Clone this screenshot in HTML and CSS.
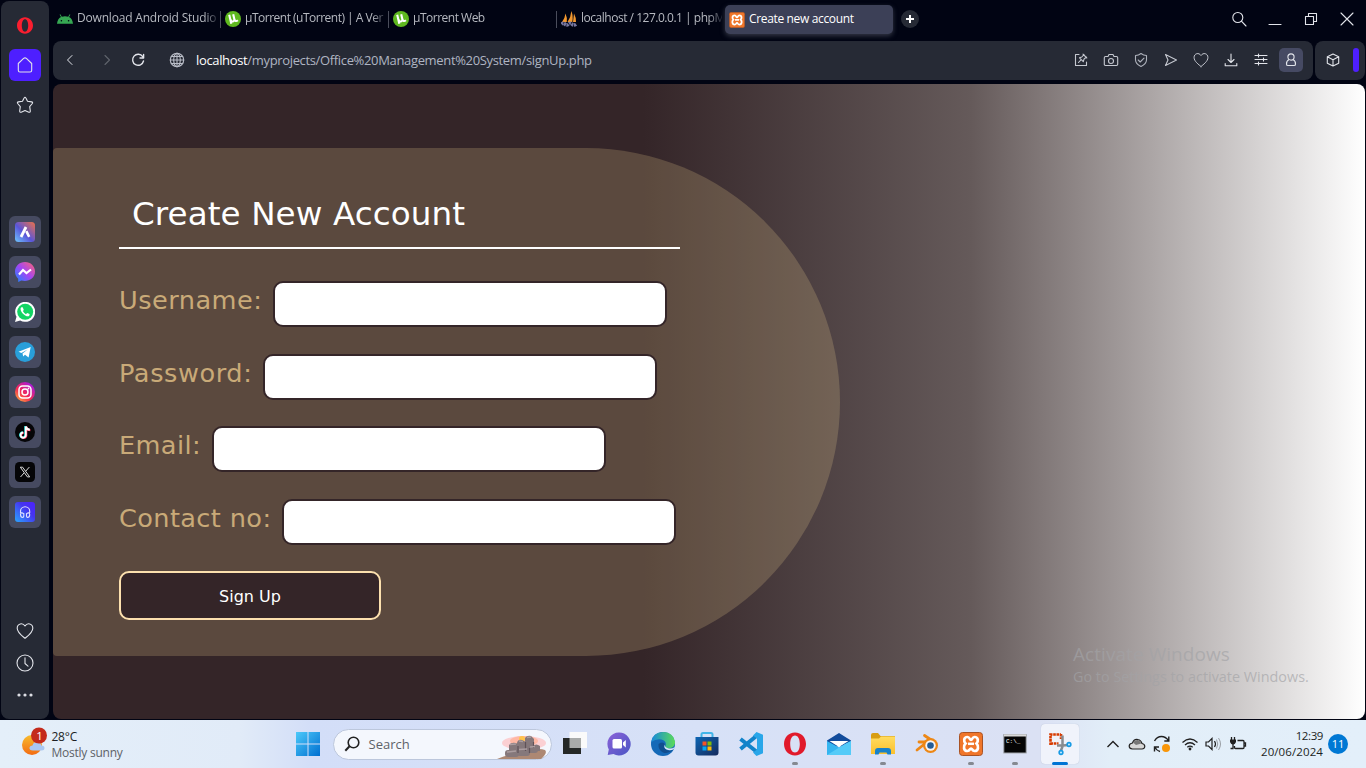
FILE: index.html
```html
<!DOCTYPE html>
<html lang="en">
<head>
<meta charset="utf-8">
<title>Create new account</title>
<link rel="stylesheet" href="styles.css">
</head>
<body>
<svg class="defs" width="0" height="0">
  <defs>
    <linearGradient id="aria" x1="0" y1="1" x2="1" y2="0"><stop offset="0" stop-color="#6fc8ff"/><stop offset=".45" stop-color="#5a55d8"/><stop offset="1" stop-color="#ee7148"/></linearGradient>
    <linearGradient id="mess" x1="0" y1="1" x2="1" y2="0"><stop offset="0" stop-color="#1688ff"/><stop offset=".5" stop-color="#a345f4"/><stop offset="1" stop-color="#ff6670"/></linearGradient>
    <linearGradient id="insta" x1="0" y1="1" x2=".8" y2="0"><stop offset="0" stop-color="#ffc63c"/><stop offset=".45" stop-color="#f52b50"/><stop offset="1" stop-color="#a018e8"/></linearGradient>
    <linearGradient id="phones" x1="0" y1="1" x2="1" y2="0"><stop offset="0" stop-color="#2aa6ff"/><stop offset=".6" stop-color="#4535ef"/><stop offset="1" stop-color="#4d20ff"/></linearGradient>
    <linearGradient id="win" x1="0" y1="0" x2="1" y2="1"><stop offset="0" stop-color="#4cc9fa"/><stop offset="1" stop-color="#006fd0"/></linearGradient>
    <linearGradient id="edge" x1="0" y1="0" x2="1" y2="0"><stop offset="0" stop-color="#1788dc"/><stop offset="1" stop-color="#5bdc58"/></linearGradient>
    <linearGradient id="store" x1="0" y1="0" x2="1" y2="1"><stop offset="0" stop-color="#0d66b4"/><stop offset="1" stop-color="#152a5c"/></linearGradient>
    <linearGradient id="chat" x1="0" y1="0" x2="1" y2="1"><stop offset="0" stop-color="#8b62d8"/><stop offset="1" stop-color="#4a55c4"/></linearGradient>
    <linearGradient id="folder" x1="0" y1="0" x2="0" y2="1"><stop offset="0" stop-color="#ffdc60"/><stop offset="1" stop-color="#fbc02c"/></linearGradient>
    <linearGradient id="sun" x1="0" y1="0" x2="0" y2="1"><stop offset="0" stop-color="#f8bc2d"/><stop offset="1" stop-color="#f36b12"/></linearGradient>
    <symbol id="ut" viewBox="0 0 16 16"><circle cx="8" cy="8" r="8" fill="#5fb91f"/><path d="M4.200 3.700L6.300 12.800M5.500 8.500C6.500 11.500 9.800 11 9.300 8L8.200 3.300M9.300 8C9.800 10.200 11.300 10.600 12.900 9.200" fill="none" stroke="#fff" stroke-width="2.100"/></symbol>
    <symbol id="xampp" viewBox="0 0 24 24"><rect x=".5" y=".5" width="23" height="23" rx="3" fill="#f0762a" stroke="#a95325"/><path d="M8.500 5C4.500 5 4.500 9.500 6.500 11.500C4 14 4.500 19 8.500 19C11 19 10.500 16.500 12 16.500S13 19 15.500 19C19.500 19 20 14 17.500 11.500C19.500 9.500 19.500 5 15.500 5C13 5 13.500 8 12 8S11 5 8.500 5Z" fill="none" stroke="#fff" stroke-width="2.700"/><path d="M9 11.800h6" stroke="#fff" stroke-width="2.500"/></symbol>
    <symbol id="heart" viewBox="0 0 18 18"><path d="M9 16.300C6.500 14.200 1.200 10.500 1.200 6.200C1.200 1.500 6.700.2 9 4C11.300.2 16.800 1.500 16.800 6.200C16.800 10.500 11.500 14.200 9 16.300Z"/></symbol>
  </defs>
</svg>
<div class="browser">
  <nav class="sidebar">
    <span class="cell"><svg width="16" height="17" viewBox="0 0 16 17"><path fill-rule="evenodd" fill="#fa1e2f" d="M8 .3C3.500.3 0 4 0 8.500S3.500 16.700 8 16.700S16 13 16 8.500S12.500.3 8 .3ZM8 2.300C9.900 2.300 11.200 5 11.200 8.500S9.900 14.700 8 14.700S4.800 12 4.800 8.500S6.100 2.300 8 2.300Z"/></svg></span>
    <span class="cell home"><svg class="line" width="16" height="16" viewBox="0 0 16 16"><path d="M1.300 6.500L6.600 1.400Q8 .3 9.400 1.400L14.700 6.500V13.200Q14.700 15 13 15H3Q1.300 15 1.300 13.200Z"/></svg></span>
    <span class="cell"><svg class="line" width="18" height="18" viewBox="0 0 18 18"><path d="M9 1.200Q9.600 1.200 9.900 1.900L11.500 5.200L15.600 5.900Q17.200 6.300 16.300 7.500L13.700 10.600L14.300 14.900Q14.300 16.700 12.800 16.200L9 14.500L5.200 16.200Q3.700 16.700 3.700 14.900L4.300 10.600L1.700 7.500Q.8 6.300 2.400 5.900L6.500 5.200L8.100 1.900Q8.400 1.200 9 1.200Z"/></svg></span>
    <div class="apps">
      <span class="cell app"><svg width="20" height="20" viewBox="0 0 20 20"><rect width="20" height="20" rx="3.500" fill="url(#aria)"/><path d="M11 5L6 15" stroke="#fff" stroke-width="2.800"/><path d="M11.300 9.200L14.200 14.800" stroke="#fff" stroke-width="2.600"/></svg></span>
      <span class="cell app"><svg width="20" height="20" viewBox="0 0 20 20"><path fill="url(#mess)" d="M10 0C4.300 0 0 4.100 0 9.600C0 12.600 1.200 15 3.200 16.700V20L6.400 18.500C12.500 20.300 20 17 20 9.600C20 4.100 15.700 0 10 0Z"/><path d="M4 12.500L8 8L11.500 11L16 7.500" fill="none" stroke="#fff" stroke-width="2.200"/></svg></span>
      <span class="cell app"><svg width="20" height="20" viewBox="0 0 20 20"><path d="M0 20L1.500 14.800A10 10 0 1 1 5.200 18.500Z" fill="#fff"/><circle cx="10.200" cy="9.800" r="8" fill="#13d564"/><path d="M6.500 5.300C4.500 6.500 6 10 8.300 12C11 14.500 13.500 15.200 14.500 13.200L14.600 12L12.200 10.900L10.900 12.200Q8.800 11.200 7.900 9.100L8.800 7.900L7.700 5.300Z" fill="#fff"/></svg></span>
      <span class="cell app"><svg width="20" height="20" viewBox="0 0 20 20"><circle cx="10" cy="10" r="10" fill="#299fda"/><path d="M3.500 9.800L15.700 5L13.600 15.400L10 12.700L8.200 14.600L7.500 11.600L12.600 7.500L6.400 11.100Z" fill="#fff"/></svg></span>
      <span class="cell app"><svg width="20" height="20" viewBox="0 0 20 20"><circle cx="10" cy="10" r="10" fill="url(#insta)"/><g fill="none" stroke="#fff" stroke-width="1.500"><rect x="4" y="4" width="12" height="12" rx="3.500"/><circle cx="10" cy="10" r="3"/></g><circle cx="13.500" cy="6.500" r=".9" fill="#fff"/></svg></span>
      <span class="cell app"><svg width="20" height="20" viewBox="0 0 20 20"><circle cx="10" cy="10" r="10" fill="#050507"/><g fill="none" stroke-width="1.900"><path stroke="#23e6e0" d="M10.200 4v8.800a2.600 2.600 0 1 1-2.600-2.500M10.500 4.200q.5 3 3.900 3.200"/><path stroke="#f8305c" d="M11.400 4.800v8.600a2.600 2.600 0 1 1-2.600-2.500M11.500 5q.5 3 3.900 3.200"/><path stroke="#fff" d="M10.800 4.400V13a2.600 2.600 0 1 1-2.600-2.500M10.900 4.500q.5 3 3.900 3.200"/></g></svg></span>
      <span class="cell app"><svg width="20" height="20" viewBox="0 0 20 20"><rect width="20" height="20" rx="4.500" fill="#050507"/><path d="M5.300 5.200h2.300l7.100 9.700h-2.300ZM14.300 5.100L10.700 9.200M9 11L5.500 15" fill="none" stroke="#ddd" stroke-width="1"/></svg></span>
      <span class="cell app"><svg width="20" height="20" viewBox="0 0 20 20"><rect width="20" height="20" rx="3" fill="url(#phones)"/><path d="M5.500 11V9.300a4.600 4.600 0 0 1 9.200 0V11M8.800 14V11.600Q5.700 9.700 5.500 12.500Q5.500 15.500 7.800 15.500Q8.800 15 8.800 14ZM11.500 14V11.600Q14.500 9.700 14.700 12.500Q14.700 15.500 12.500 15.500Q11.500 15 11.500 14Z" fill="none" stroke="#dfe0ff" stroke-width="1.100"/></svg></span>
    </div>
    <div class="side-end">
      <span class="cell"><svg class="line" width="18" height="18"><use href="#heart"/></svg></span>
      <span class="cell"><svg class="line" width="18" height="18" viewBox="0 0 18 18"><circle cx="9" cy="9" r="8"/><path d="M9 3.800V9.500L12 12.200"/></svg></span>
      <span class="cell"><svg width="16" height="4" viewBox="0 0 16 4" fill="#dcdee4"><circle cx="2" cy="2" r="1.600"/><circle cx="8" cy="2" r="1.600"/><circle cx="14" cy="2" r="1.600"/></svg></span>
    </div>
  </nav>
  <div class="main">
    <header class="tabs">
      <div class="tab"><svg width="16" height="16" viewBox="0 0 16 16"><path d="M0 12.800Q.5 7.800 4 6.100L2.600 3.700L3.300 3.300L4.800 5.700Q8 4.600 11.200 5.700L12.700 3.300L13.400 3.700L12 6.100Q15.500 7.800 16 12.800Z" fill="#36a853"/><circle cx="4.400" cy="9.800" r=".8" fill="#010413"/><circle cx="11.600" cy="9.800" r=".8" fill="#010413"/></svg><span class="tab-title t1">Download Android Studio</span></div>
      <div class="tab ruled"><svg width="16" height="16"><use href="#ut"/></svg><span class="tab-title t2">µTorrent (uTorrent) | A Ver</span></div>
      <div class="tab ruled"><svg width="16" height="16"><use href="#ut"/></svg><span class="tab-title t3">µTorrent Web</span></div>
      <div class="tab ruled"><svg width="16" height="16" viewBox="0 0 16 16"><path d="M1 11Q4 7 4.500 2.500Q6.500 7 5.800 11ZM6.500 11Q10 6 10.300 0Q12.500 5 11.300 11ZM12 11L13 2.500Q15.200 6.500 15 11Z" fill="#f2982f"/><path d="M.5 13.200q2-1.800 3.500 0t3.500 0 3.500 0 4 0" stroke="#77779f" stroke-width="3.500" stroke-dasharray="2.200 .6" fill="none"/></svg><span class="tab-title t4">localhost / 127.0.0.1 | phpM</span></div>
      <div class="tab active"><svg width="16" height="16"><use href="#xampp"/></svg><span class="tab-title t5">Create new account</span></div>
      <span class="new-tab"><svg width="10" height="10" viewBox="0 0 10 10"><path d="M5 1v8M1 5h8" stroke="#fff" stroke-width="2"/></svg></span>
      <div class="window-buttons">
        <svg class="line" width="16" height="16" viewBox="0 0 16 16"><circle cx="6.800" cy="6.500" r="5"/><path d="M10.400 10.200L15 15"/></svg>
        <svg class="line" width="16" height="16" viewBox="0 0 16 16"><path d="M2 13.500h12"/></svg>
        <svg class="line" width="16" height="16" viewBox="0 0 16 16"><path d="M2.500 5.500h8v8h-8ZM5.500 5.500v-3h8v8h-3"/></svg>
        <svg class="line" width="16" height="16" viewBox="0 0 16 16"><path d="M2 2L14 14M14 2L2 14"/></svg>
      </div>
    </header>
    <div class="bars">
      <div class="address-bar">
        <svg class="line back" width="16" height="16" viewBox="0 0 16 16"><path d="M10 3.500L5.500 8L10 12.500"/></svg>
        <svg class="line forward" width="16" height="16" viewBox="0 0 16 16"><path d="M6 3.500L10.500 8L6 12.500"/></svg>
        <svg class="line reload" width="16" height="16" viewBox="0 0 16 16"><path d="M12.700 4.700A5.500 5.500 0 1 0 13.500 9M13.600 2.500V6H10"/></svg>
        <svg class="line globe" width="16" height="16" viewBox="0 0 16 16"><g stroke="#b9bdc7"><circle cx="8" cy="8" r="6.700"/><ellipse cx="8" cy="8" rx="3.300" ry="6.700"/><path d="M8 1.300v13.400M1.300 8h13.400M2.300 4.500h11.400M2.300 11.500h11.400"/></g></svg>
        <span class="url"><b>localhost</b>/myprojects/Office%20Management%20System/signUp.php</span>
        <div class="actions">
          <span><svg class="line soft" width="16" height="16" viewBox="0 0 16 16"><path d="M6 2.500H2.500v11h11V10M10 2.200L13.800 6M11 2.500L8.800 5L6.500 5.800L10.300 9.600L11 7.200L13.500 5M8 7.800L5.500 10.500"/></svg></span>
          <span><svg class="line soft" width="16" height="16" viewBox="0 0 16 16"><path d="M5 4.500L6 2.500h4l1 2h2.500q1.200 0 1.200 1.200v6.600q0 1.200-1.200 1.200h-11q-1.200 0-1.200-1.200V5.700Q1.300 4.500 2.500 4.500Z"/><circle cx="8" cy="9" r="2.500"/></svg></span>
          <span><svg class="line dim" width="16" height="16" viewBox="0 0 16 16"><path d="M8 1.500Q10.500 3.500 13.500 3.500V8Q13.300 12 8 14.500Q2.700 12 2.500 8V3.500Q5.500 3.500 8 1.500ZM5.200 8L7.200 10L11 6.200"/></svg></span>
          <span><svg class="line soft" width="16" height="16" viewBox="0 0 16 16"><path d="M2.500 2.500L13.500 8L2.500 13.500L5 8Z"/></svg></span>
          <span><svg class="line soft" width="16" height="16"><use href="#heart"/></svg></span>
          <span><svg class="line" width="16" height="16" viewBox="0 0 16 16"><path d="M8 2v8.500M5 7.500L8 10.500L11 7.500M2.200 11.500v2.200h11.600v-2.200"/></svg></span>
          <span><svg class="line" width="16" height="16" viewBox="0 0 16 16"><path d="M2 3.500h12M2 7.500h12M2 11.500h12M5.500 2v3M10.500 6v3M5.500 10v3"/></svg></span>
          <span class="profile"><svg class="line" width="16" height="16" viewBox="0 0 16 16"><circle cx="8" cy="5" r="3.100"/><path d="M6 7.500Q3.200 9 3.500 12.200Q3.500 13.500 5 13.500h6Q12.500 13.500 12.500 12.200Q12.800 9 10 7.500"/></svg></span>
        </div>
      </div>
      <div class="extension-bar"><svg class="line" width="16" height="16" viewBox="0 0 16 16"><path d="M8 2L13.700 4.800V11.200L8 14L2.300 11.200V4.800ZM2.300 4.800L8 7.700L13.700 4.800M8 7.700V14"/></svg><i></i></div>
    </div>
    <main class="page">
      <form class="panel">
        <h1><span>Create New Account</span></h1>
        <div class="field"><label class="username">Username:</label><input type="text"></div>
        <div class="field"><label class="password">Password:</label><input type="password"></div>
        <div class="field"><label class="email">Email:</label><input type="text"></div>
        <div class="field"><label class="contact">Contact no:</label><input type="text"></div>
        <button type="button"><span>Sign Up</span></button>
      </form>
      <div class="watermark"><div class="wm-title"><span>Activate Windows</span></div><div class="wm-text"><span>Go to Settings to activate Windows.</span></div></div>
    </main>
  </div>
</div>
<footer class="taskbar">
  <div class="weather">
    <svg width="28" height="30" viewBox="0 0 28 30"><circle cx="11" cy="18" r="10" fill="url(#sun)"/><path d="M12 23.500q-4 0-3.500-3q.5-2 3-2q1-4 5.500-3q3 .5 3.500 3q3 0 3 2.500q0 2.500-3 2.500Z" fill="#a9c7f3"/><circle cx="18" cy="8.500" r="8" fill="#c42b1c"/><text x="15.300" y="12.600" fill="#fff" font-size="11.500">1</text></svg>
    <div><div class="temp">28°C</div><div class="sky">Mostly sunny</div></div>
  </div>
  <div class="apps-row">
    <svg class="start" width="24" height="24" viewBox="0 0 24 24"><path d="M0 0h11.500v11.500H0ZM12.500 0H24v11.500H12.500ZM0 12.500h11.500V24H0ZM12.500 12.500H24V24H12.500Z" fill="url(#win)"/></svg>
    <div class="search"><svg width="16" height="16" viewBox="0 0 16 16"><circle cx="9.500" cy="6.500" r="5.300" fill="none" stroke="#222" stroke-width="1.600"/><path d="M5.500 10.300L1.300 14.800" stroke="#222" stroke-width="2"/></svg><span>Search</span>
      <svg class="rocks" width="52" height="26" viewBox="0 0 52 26"><ellipse cx="28" cy="9" rx="22" ry="7" fill="#fbd0d3"/><ellipse cx="28" cy="7" rx="14" ry="5" fill="#ffb8a4"/><circle cx="26" cy="5" r="3" fill="#ffc44c"/><path d="M1 25Q12 20 22 20Q40 13 49 16Q52 19 45 25Z" fill="#ad8873"/><g fill="#85787b"><path d="M13 17V11Q15 8 20 9L23 11V17Z"/><path d="M21 18V9Q22 5 26 6L30 8V18Z"/><path d="M29 17V4Q31 1 35 2L38 5V17Z"/><path d="M37 17V12Q40 9 44 12V17Z"/><rect x="9" y="16" width="14" height="7" rx="3"/><rect x="21" y="14" width="13" height="8" rx="3"/><rect x="32" y="12" width="10" height="7" rx="3"/></g><path d="M22 12v7M29.500 8v9M33.500 14v5M37.500 8v6" stroke="#5f5258" stroke-width="1.200"/><path d="M14 10.500l6-.5M23 7l4 .500M31 3.500l4-.5M11 18l9-1M23 15.500l8-.5M34 13l5-.5" stroke="#ab9da0" stroke-width="1.500"/></svg>
    </div>
    <span class="task"><svg width="24" height="24" viewBox="0 0 24 24"><path d="M6.500 0H24v16H6.500Z" fill="#fafafa"/><path d="M0 6h18v16H0Z" fill="#252827"/><path d="M6.500 6H18v10H6.500Z" fill="#a9abaa"/></svg></span>
    <span class="task"><svg width="24" height="24" viewBox="0 0 24 24"><path d="M12 .5a11.500 11.500 0 1 1-5.500 21.500L.7 23L1.800 17.500A11.500 11.500 0 0 1 12 .5Z" fill="url(#chat)"/><rect x="5.500" y="7" width="9.500" height="9.500" rx="1.500" fill="#fff"/><path d="M16 10.500L18.800 8V15.500L16 13Z" fill="#fff"/></svg></span>
    <span class="task"><svg width="24" height="24" viewBox="0 0 24 24"><circle cx="12" cy="12" r="12" fill="#1569b8"/><path d="M.3 10Q2 0 12 0Q22 0 24 9.500Q24.500 16 17 16.500Q13 16.500 14.500 14Q16 9 10.500 7.500Q5 6.500 .3 10Z" fill="url(#edge)"/><path d="M7.500 12Q7 18 12 20.500Q17 22.500 22 18Q17 20 14 16.500Q12.500 14.500 14 12.500Q12.500 9 7.500 12Z" fill="#114e8f"/><path d="M14 12.500Q12 15.500 15.500 17.500Q19 19 22.300 17.500L24 15Q20 17.500 16.500 16Q13.500 15 14 12.500Z" fill="#dce8f8"/></svg></span>
    <span class="task"><svg width="24" height="24" viewBox="0 0 24 24"><path d="M6.500 6V2.500Q6.500 1 8 1h8q1.500 0 1.500 1.500V6" fill="none" stroke="#42b5e8" stroke-width="2"/><path d="M.5 5h23v15.500q0 3-3 3H3.500q-3 0-3-3Z" fill="url(#store)"/><path d="M7.500 9.500h4v4h-4Z" fill="#f35325"/><path d="M12.500 9.500h4v4h-4Z" fill="#81bc06"/><path d="M7.500 14.500h4v4h-4Z" fill="#05a6f0"/><path d="M12.500 14.500h4v4h-4Z" fill="#ffba08"/></svg></span>
    <span class="task"><svg width="24" height="24" viewBox="0 0 24 24"><path d="M1.500 7L18 20M1.500 17L18 3.500" stroke="#1283ca" stroke-width="4"/><path d="M17.500 0L24 2.800V21.200L17.500 24L14 20.500L18 17.500V6.500L14 3.500Z" fill="#29a6e9"/></svg></span>
    <span class="task run"><svg width="24" height="24" viewBox="0 0 24 24"><path fill-rule="evenodd" fill="#e11a2b" d="M12 .5C5.500.5 1 5.500 1 12S5.500 23.500 12 23.500S23 18.500 23 12S18.500.5 12 .5ZM12 3.500C15 3.500 16.800 7 16.800 12S15 20.500 12 20.500S7.200 17 7.200 12S9 3.500 12 3.500Z"/></svg></span>
    <span class="task"><svg width="24" height="24" viewBox="0 0 24 24"><path d="M0 8.500L12 1L24 8.500V17L12 14L0 17Z" fill="#124b9b"/><path d="M2.500 9h19L12 15Z" fill="#fff"/><path d="M0 9L12 15.500L24 9V23H0Z" fill="#35b5f0"/><path d="M0 23L18 12L24 9V23Z" fill="#55cbf8"/></svg></span>
    <span class="task run"><svg width="24" height="24" viewBox="0 0 24 24"><path d="M0 3q0-2 2-2h5l2.500 3H24v8H0Z" fill="#d89d12"/><path d="M0 6.500h8L10 4.500h14V22H0Z" fill="url(#folder)"/><path d="M4 22.500V19q0-3 3-3h10q3 0 3 3v3.500H16.500L15.500 20.500H8.500L7.500 22.500Z" fill="#1881c8"/></svg></span>
    <span class="task"><svg width="24" height="24" viewBox="0 0 24 24"><path d="M9.500 3.500L20 10.500M4 10H17M2 18L12 10" stroke="#ed8715" stroke-width="2.800" stroke-linecap="round"/><circle cx="15.500" cy="13.500" r="7.500" fill="#ed8715"/><circle cx="15.500" cy="13.500" r="5.200" fill="#f5f5f5"/><circle cx="15.500" cy="13.500" r="3.300" fill="#245d96"/></svg></span>
    <span class="task run"><svg width="24" height="24"><use href="#xampp"/></svg></span>
    <span class="task run"><svg width="24" height="24" viewBox="0 0 24 24"><rect x=".8" y="2.500" width="22.400" height="18.500" fill="#050505" stroke="#a5a9ae"/><path d="M1 3.500h22" stroke="#dadada" stroke-width="2"/><text x="3" y="11" font-size="6" font-family="Liberation Mono" fill="#fff">C:\_</text></svg></span>
    <span class="task current"><svg width="24" height="24" viewBox="0 0 24 24"><path d="M2.500 13V2.500h10.500M13 2v5M2.500 11.500h8" fill="none" stroke="#d83b01" stroke-width="2.600" stroke-dasharray="2.600 .7"/><path d="M14.500 3.500v11l-1.500 4M9 13.500h6L20 13" fill="none" stroke="#898c90" stroke-width="2.500"/><g fill="#d9f1ff" stroke="#179ae4" stroke-width="1.700"><circle cx="21" cy="12.500" r="1.800"/><circle cx="13" cy="20.500" r="1.800"/></g></svg></span>
  </div>
  <div class="tray">
    <svg width="16" height="16" viewBox="0 0 16 16"><path d="M2.500 11L8 5.500L13.500 11" fill="none" stroke="#202020" stroke-width="1.400"/></svg>
    <svg width="18" height="16" viewBox="0 0 18 16"><path d="M4.500 13Q1 12.700 1.200 9.800Q1.500 7.500 4.500 7Q6 2.500 10 3.500Q13 4 14 7.500Q16.800 8 16.800 10.500Q16.500 13 14 13Z" fill="#d7d7d7" stroke="#222" stroke-width="1.200"/><path d="M5 6.500Q6.500 3.500 10 4Q13 5 13.300 7.500L8 9Z" fill="#777"/></svg>
    <svg width="18" height="18" viewBox="0 0 18 18"><path d="M1.500 6Q4 1.500 8.500 1.500Q12.500 1.500 15.500 5.500M15.800 1.500v4.500h-4.500M7 16.500Q3.500 15.500 2 12.500M1.500 16.500V12h4.500" fill="none" stroke="#202020" stroke-width="1.400"/><circle cx="13" cy="13" r="4" fill="#f99608"/></svg>
    <svg class="wifi" width="18" height="16" viewBox="0 0 18 16"><path d="M1.500 6.500Q9-.5 16.500 6.500M4 9Q9 4.500 14 9M6.300 11.300Q9 9 11.700 11.300" fill="none" stroke="#202020" stroke-width="1.300"/><circle cx="9" cy="13" r="1.400" fill="#202020"/></svg>
    <svg class="volume" width="18" height="16" viewBox="0 0 18 16"><path d="M2 6H4.500L8 2.500V13.500L4.500 10H2ZM10.500 5Q12.500 8 10.500 11" fill="none" stroke="#202020" stroke-width="1.200"/><path d="M12.500 3.500Q15 8 12.500 12.500M14.500 2Q18.500 8 14.500 14" fill="none" stroke="#999ea4" stroke-width="1"/></svg>
    <svg class="battery" width="18" height="16" viewBox="0 0 18 16"><path d="M8.500 4.500h5.500q1 0 1 1v6q0 1-1 1H6.500q-1 0-1-1V10M15.500 7h1v3h-1M2.500 1v3M5.500 1v3M4 8v4.500H1.500" fill="none" stroke="#202020" stroke-width="1.300"/><path d="M1 3.500h6V6Q6 8.500 4 8.500T1 6Z" fill="#202020"/></svg>
    <div class="clock"><div class="time">12:39</div><div class="date">20/06/2024</div></div>
    <span class="badge">11</span>
  </div>
</footer>
</body>
</html>
```

FILE: styles.css
```css
* { box-sizing: border-box; }
body { margin: 0; width: 1366px; height: 768px; overflow: hidden; font-family: "Open Sans", "Noto Sans", sans-serif; font-size: 12px; background: #010413; }
svg { display: block; flex: none; }
.defs { position: absolute; }
.line { fill: none; stroke: #e2e4ea; stroke-width: 1.1; stroke-linecap: round; stroke-linejoin: round; }
.soft { stroke: #c5c8d0; }
.dim { stroke: #aeb2bc; }
.browser { display: flex; gap: 4px; height: 720px; padding: 1px 1px 1px; background: #010413; }

.sidebar { display: flex; flex-direction: column; align-items: center; width: 48px; padding-top: 8px; background: #262a35; border-radius: 8px; }
.cell { display: flex; align-items: center; justify-content: center; flex: none; width: 32px; height: 32px; border-radius: 6px; }
.sidebar > .cell { margin-bottom: 8px; }
.home { background: #4e1fff; }
.apps { display: flex; flex-direction: column; gap: 8px; margin-top: 87px; }
.app { background: #464a60; }
.side-end { margin-top: auto; padding: 0 1px 8px 0; }

.main { flex: 1; min-width: 0; display: flex; flex-direction: column; }
.tabs { display: flex; height: 40px; padding-top: 3px; }
.tab { display: flex; align-items: center; gap: 4px; width: 168px; height: 30px; padding: 0 3px 0 4px; position: relative; color: #b6b9c0; }
.tab-title { flex: 1; overflow: hidden; white-space: nowrap; line-height: 20px; padding-bottom: 2px; -webkit-mask-image: linear-gradient(90deg, #000 90%, rgba(0, 0, 0, .15)); }
.ruled::before { content: ""; position: absolute; left: -1px; top: 7px; width: 1px; height: 17px; background: #4a4d5b; }
.active { height: 29px; margin-top: 1px; background: #3c4057; border-radius: 5px; color: #fff; box-shadow: 0 2px 5px #343746; }
.t1 { letter-spacing: -.19px; }
.t2 { letter-spacing: -.5px; }
.t3 { letter-spacing: -.5px; }
.t4 { letter-spacing: -.48px; }
.t5 { letter-spacing: -.35px; -webkit-mask-image: none; }
.new-tab { display: flex; align-items: center; justify-content: center; width: 18px; height: 18px; margin: 6px 0 0 8px; border-radius: 9px; background: #262a35; }
.window-buttons { display: flex; gap: 20px; margin: 7px 10px 0 auto; }

.bars { display: flex; gap: 2px; height: 39px; }
.address-bar { display: flex; align-items: center; width: 1260px; padding: 0 10px 1px 9px; border-radius: 8px; background: #262a35; }
.back { stroke-width: 1; }
.forward { margin-left: 21px; opacity: .3; }
.reload { margin-left: 15px; stroke-width: 1.4; }
.globe { margin-left: 23px; }
.url { margin-left: 11px; color: #afb5c2; font-size: 13px; letter-spacing: -.345px; white-space: nowrap; line-height: 20px; }
.url b { font-weight: 400; color: #fff; }
.actions { display: flex; gap: 6px; margin-left: auto; }
.actions span { display: flex; align-items: center; justify-content: center; width: 24px; height: 24px; border-radius: 5px; }
.actions .profile { background: #464a63; }
.extension-bar { display: flex; align-items: center; justify-content: space-between; width: 50px; padding: 0 6px 1px 10px; border-radius: 8px; background: #262a35; }
.extension-bar i { width: 6px; height: 24px; border-radius: 3px; background: #4e1fff; }

.page { position: relative; height: 635px; margin-top: 4px; padding-top: 64px; overflow: hidden; border-radius: 8px; background: linear-gradient(90deg, #342528 45%, #655a5a 70%, #fff 100%); }
.panel { width: 787px; height: 508px; padding: 38px 66px 0; border-radius: 4px 254px 254px 4px; background: rgba(252, 222, 148, .2); font-family: "DejaVu Sans", sans-serif; }
h1 { width: 561px; height: 63px; margin: 0 0 32px; padding: 9px 13px 0; border-bottom: 2px solid #fff; color: #fff; font-size: 32.6px; font-weight: 400; line-height: 38px; letter-spacing: .08px; white-space: nowrap; }
.field { display: flex; height: 46px; margin-bottom: 26.6px; }
label { margin-right: 11px; color: #c9aa78; font-size: 25.6px; line-height: 38px; white-space: nowrap; }
.username { letter-spacing: .46px; }
.password { letter-spacing: .58px; }
.email { letter-spacing: .38px; }
.contact { letter-spacing: .38px; }
input { width: 394px; height: 46px; border: 2px solid #342528; border-radius: 10px; background: #fff; outline: none; }
button { width: 262px; height: 49px; padding: 2px 0 0; border: 2px solid #fce0ae; border-radius: 10px; background: #342528; color: #fff; font: 16px "DejaVu Sans", sans-serif; }
.watermark { position: absolute; left: 1020px; top: 557px; color: rgba(163, 163, 166, .68); white-space: nowrap; }
.wm-title { font-size: 19px; line-height: 26px; letter-spacing: .06px; }
.wm-text { font-size: 14.4px; line-height: 20px; }

.taskbar { display: flex; align-items: center; height: 48px; background: linear-gradient(90deg, #e4eff9 0, #e1ebf8 240px, #d3def8 310px, #d7e1f7 700px, #dbe1f4 1040px, #e2eef8 1110px, #e3effa 100%); color: #1c1f24; }
.weather { display: flex; gap: 2.500px; width: 274px; padding-left: 21px; line-height: 16px; }
.weather > svg { margin-top: -1px; }
.weather > div { padding-top: 1px; letter-spacing: -.24px; }
.sky { color: #5d6267; }
.apps-row { display: flex; align-items: center; margin-left: 21.500px; height: 48px; }
.search { position: relative; display: flex; align-items: center; width: 219px; height: 31px; margin: 0 1px 0 13px; padding-left: 10px; gap: 9px; border: 1px solid #bcc7dc; border-radius: 16px; background: #f4f7fd; color: #5d6269; font-size: 13px; }
.rocks { position: absolute; right: 3px; top: 4px; }
.task { position: relative; display: flex; align-items: center; justify-content: center; width: 44.1px; height: 40px; }
.run::after, .current::after { content: ""; position: absolute; left: 50%; bottom: -1px; width: 6px; height: 3px; margin-left: -3px; border-radius: 2px; background: #858991; }
.current { width: 38px; margin-left: 3px; background: #f0f3fb; border-radius: 4px; box-shadow: 0 0 1px #adb7ca; }
.current::after { width: 16px; margin-left: -8px; background: #0074d4; }
.tray { display: flex; align-items: center; margin-left: auto; padding-right: 18px; }
.tray > svg { margin-right: 7px; }
.tray .wifi { margin-left: 3px; margin-right: 5px; }
.tray .volume { margin-right: 7px; }
.tray .battery { margin-right: 13px; }
.clock { width: 63px; text-align: right; line-height: 16px; font-size: 11.500px; white-space: nowrap; }
.time { letter-spacing: -.4px; }
.date { letter-spacing: .1px; }
.badge { width: 20px; height: 20px; margin-left: 5px; border-radius: 10px; background: #0078d4; color: #fff; text-align: center; font-size: 11px; line-height: 19px; }
```
